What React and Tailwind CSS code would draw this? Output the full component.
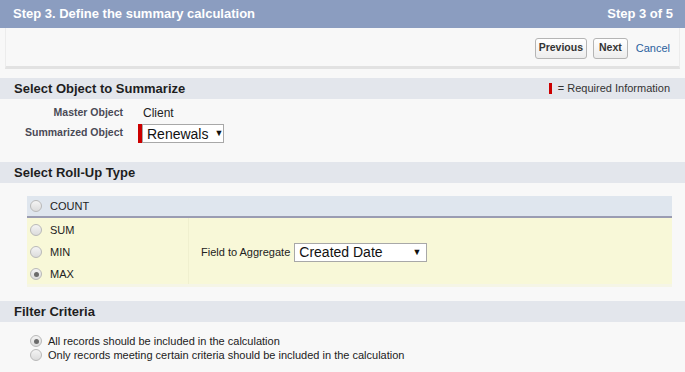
import React from 'react'

function Radio({ checked }) {
  return (
    <span className="inline-flex items-center justify-center w-[12px] h-[12px] rounded-full border border-[#b9b9b9] bg-gradient-to-b from-[#f4f4f4] to-[#dcdcdc] shrink-0">
      {checked && <span className="w-[5px] h-[5px] rounded-full bg-[#6b6b6b]" />}
    </span>
  )
}

function SectionHeader({ children, right }) {
  return (
    <div className="h-[21px] bg-[#e3e6ec] flex items-center justify-between pl-[14px] pr-[15px]">
      <span className="text-[13px] font-bold text-[#1e1e1e]">{children}</span>
      {right}
    </div>
  )
}

function Select({ value, className }) {
  return (
    <div className={`h-[19px] bg-white border border-[#a8a8a8] flex items-center justify-between pl-[4px] pr-[5px] ${className}`}>
      <span className="text-[14px] text-[#111] leading-none">{value}</span>
      <span className="text-[9px] text-[#111] leading-none">▼</span>
    </div>
  )
}

export default function App() {
  return (
    <div className="w-[685px] h-[372px] overflow-hidden bg-[#f8f8f8] text-[#222]" style={{ fontFamily: '"Liberation Sans", Arial, sans-serif' }}>
      {/* Title bar */}
      <div className="h-[28px] bg-[#8b9dc0] flex items-center justify-between pl-[13px] pr-[12px] text-white font-bold text-[13px]">
        <span>Step 3. Define the summary calculation</span>
        <span>Step 3 of 5</span>
      </div>

      {/* Buttons */}
      <div className="h-[41px] mx-[5px] border-x border-[#ececec] border-b-[3px] border-b-[#e2e2e2] flex items-center justify-end pr-[9px] gap-[6px] pt-[2px]">
        <button className="h-[21px] px-[3px] border border-[#b5b5b5] rounded-[3px] bg-gradient-to-b from-white to-[#ededed] text-[10.5px] font-bold text-[#333]">Previous</button>
        <button className="h-[21px] px-[5px] border border-[#b5b5b5] rounded-[3px] bg-gradient-to-b from-white to-[#ededed] text-[10.5px] font-bold text-[#333]">Next</button>
        <a className="ml-[2px] text-[11px] text-[#2a5f9e]">Cancel</a>
      </div>

      <div className="h-[9px]" />

      <SectionHeader right={
        <span className="flex items-center gap-[6px] text-[11px] text-[#333]">
          <span className="w-[3px] h-[11px] bg-[#c00]" />
          <span>= Required Information</span>
        </span>
      }>Select Object to Summarize</SectionHeader>

      <div className="h-[63px] pt-[7px]">
        <div className="flex items-center h-[14px]">
          <span className="w-[123px] text-right text-[10.5px] font-bold text-[#4a4a56]">Master Object</span>
          <span className="ml-[20px] text-[12px] text-[#222]">Client</span>
        </div>
        <div className="flex items-start mt-[4px]">
          <span className="w-[123px] text-right text-[10.5px] font-bold text-[#4a4a56] mt-[1px]">Summarized Object</span>
          <span className="ml-[15px] w-[4px] h-[19px] bg-[#c00]" />
          <Select value="Renewals" className="w-[82px] justify-start gap-[6px]" />
        </div>
      </div>

      <SectionHeader>Select Roll-Up Type</SectionHeader>

      <div className="h-[118px] pt-[13px]">
        <div className="ml-[27px] mr-[13px]">
          <div className="h-[22px] bg-[#dfe6ee] border-b-[2px] border-[#9a9cb2] flex items-center pl-[3px] gap-[8px] text-[11px] text-[#222]">
            <Radio />
            <span>COUNT</span>
          </div>
          <div className="h-[66px] bg-[#f8f8d8] flex">
            <div className="w-[162px] border-r border-[#f0f0cf] flex flex-col pl-[3px] pt-[6px] gap-[10px] text-[11px] text-[#222]">
              <div className="flex items-center gap-[8px] h-[12px]"><Radio /><span>SUM</span></div>
              <div className="flex items-center gap-[8px] h-[12px]"><Radio /><span>MIN</span></div>
              <div className="flex items-center gap-[8px] h-[12px]"><Radio checked /><span>MAX</span></div>
            </div>
            <div className="flex items-center pl-[12px] pt-[2px] gap-[4px]">
              <span className="text-[11px] text-[#222]">Field to Aggregate</span>
              <Select value="Created Date" className="w-[133px]" />
            </div>
          </div>
          <div className="h-[3px] bg-[#f5f5e6]" />
        </div>
      </div>

      <SectionHeader>Filter Criteria</SectionHeader>

      <div className="pt-[13px] pl-[30px] flex flex-col gap-[2px] text-[11px] text-[#222]">
        <div className="flex items-center gap-[6px] h-[12px]"><Radio checked /><span>All records should be included in the calculation</span></div>
        <div className="flex items-center gap-[6px] h-[12px]"><Radio /><span>Only records meeting certain criteria should be included in the calculation</span></div>
      </div>
    </div>
  )
}
